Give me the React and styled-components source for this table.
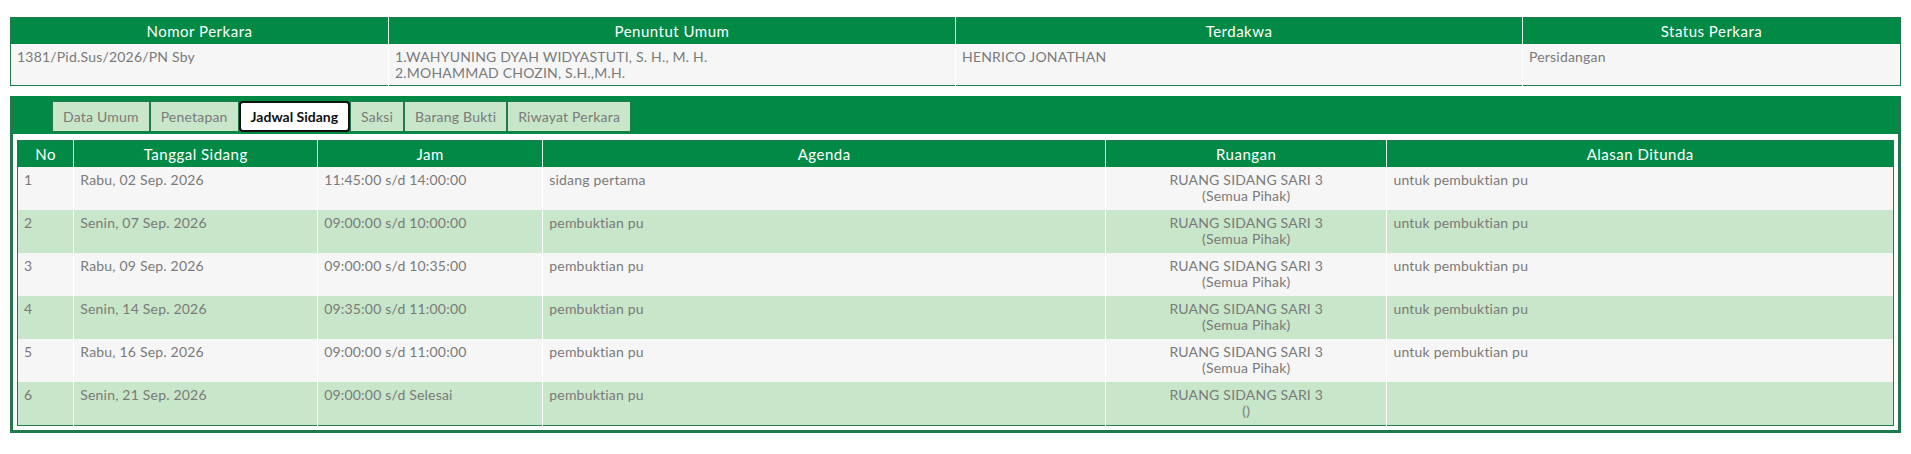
import React from 'react';
import styled, { createGlobalStyle } from 'styled-components';

const GREEN = '#008a45';
const DARK = '#1f7a4c';
const ROW_ALT = '#c8e6c9';
const ROW = '#f6f6f6';
const TEXT = '#7a7a7a';

const GlobalStyle = createGlobalStyle`
  html, body {
    margin: 0;
    background: #fff;
  }
  body {
    font-family: Lato, "Open Sans", sans-serif;
    font-size: 14px;
    letter-spacing: 0.2px;
    color: ${TEXT};
  }
`;

const Page = styled.div`
  padding: 17px 10px 0;
`;

const Table = styled.table`
  width: 100%;
  border-collapse: collapse;
  table-layout: fixed;
  border: 1px solid ${DARK};
`;

const Th = styled.th`
  background: ${GREEN};
  color: #fff;
  font-weight: normal;
  font-size: 15px;
  line-height: 18px;
  letter-spacing: 0.5px;
  height: ${p => p.$h || 26}px;
  padding: 0 5px;
  border-left: 1px solid #e8f3ec;
  &:first-child {
    border-left: none;
  }
`;

const Td = styled.td`
  vertical-align: top;
  padding: 5px 6px ${p => p.$pb ?? 6}px;
  line-height: 16px;
  text-align: ${p => (p.$center ? 'center' : 'left')};
  border-left: 1px solid #fff;
  &:first-child {
    border-left: none;
  }
`;

const Row = styled.tr`
  background: ${p => (p.$alt ? ROW_ALT : ROW)};
`;

const Panel = styled.div`
  margin-top: 10px;
  border: 3px solid ${DARK};
  border-top-color: ${GREEN};
`;

const TabStrip = styled.div`
  display: flex;
  background: ${GREEN};
  padding: 2px 0 2px 39px;
`;

const Tab = styled.div`
  height: 31px;
  box-sizing: border-box;
  display: flex;
  align-items: center;
  padding: 0 10px;
  font-size: 14px;
  background: ${p => (p.$active ? '#fff' : ROW_ALT)};
  color: ${p => (p.$active ? '#111' : TEXT)};
  font-weight: ${p => (p.$active ? 700 : 400)};
  letter-spacing: ${p => (p.$active ? '0' : '0.2px')};
  border: ${p => (p.$active ? '2px solid #111' : `1px solid ${DARK}`)};
  border-radius: ${p => (p.$active ? '4px' : '0')};
  & + & {
    margin-left: ${p => (p.$active ? '0' : '-1px')};
  }
`;

const Content = styled.div`
  padding: 6px 4px 4px;
`;

const cases = {
  nomor: '1381/Pid.Sus/2026/PN Sby',
  penuntut: ['1.WAHYUNING DYAH WIDYASTUTI, S. H., M. H.', '2.MOHAMMAD CHOZIN, S.H.,M.H.'],
  terdakwa: 'HENRICO JONATHAN',
  status: 'Persidangan',
};

const tabs = ['Data Umum', 'Penetapan', 'Jadwal Sidang', 'Saksi', 'Barang Bukti', 'Riwayat Perkara'];

const schedule = [
  ['Rabu, 02 Sep. 2026', '11:45:00 s/d 14:00:00', 'sidang pertama', '(Semua Pihak)', 'untuk pembuktian pu'],
  ['Senin, 07 Sep. 2026', '09:00:00 s/d 10:00:00', 'pembuktian pu', '(Semua Pihak)', 'untuk pembuktian pu'],
  ['Rabu, 09 Sep. 2026', '09:00:00 s/d 10:35:00', 'pembuktian pu', '(Semua Pihak)', 'untuk pembuktian pu'],
  ['Senin, 14 Sep. 2026', '09:35:00 s/d 11:00:00', 'pembuktian pu', '(Semua Pihak)', 'untuk pembuktian pu'],
  ['Rabu, 16 Sep. 2026', '09:00:00 s/d 11:00:00', 'pembuktian pu', '(Semua Pihak)', 'untuk pembuktian pu'],
  ['Senin, 21 Sep. 2026', '09:00:00 s/d Selesai', 'pembuktian pu', '()', ''],
];

export default function App() {
  return (
    <Page>
      <GlobalStyle />
      <Table>
        <colgroup>
          <col style={{ width: '20%' }} />
          <col style={{ width: '30%' }} />
          <col style={{ width: '30%' }} />
          <col style={{ width: '20%' }} />
        </colgroup>
        <thead>
          <tr>
            <Th>Nomor Perkara</Th>
            <Th>Penuntut Umum</Th>
            <Th>Terdakwa</Th>
            <Th>Status Perkara</Th>
          </tr>
        </thead>
        <tbody>
          <Row>
            <Td $pb={4}>{cases.nomor}</Td>
            <Td $pb={4}>
              {cases.penuntut[0]}
              <br />
              {cases.penuntut[1]}
            </Td>
            <Td $pb={4}>{cases.terdakwa}</Td>
            <Td $pb={4}>{cases.status}</Td>
          </Row>
        </tbody>
      </Table>

      <Panel>
        <TabStrip>
          {tabs.map(t => (
            <Tab key={t} $active={t === 'Jadwal Sidang'}>
              {t}
            </Tab>
          ))}
        </TabStrip>
        <Content>
          <Table>
            <colgroup>
              <col style={{ width: '3%' }} />
              <col style={{ width: '13%' }} />
              <col style={{ width: '12%' }} />
              <col style={{ width: '30%' }} />
              <col style={{ width: '15%' }} />
              <col style={{ width: '27%' }} />
            </colgroup>
            <thead>
              <tr>
                <Th>No</Th>
                <Th>Tanggal Sidang</Th>
                <Th>Jam</Th>
                <Th>Agenda</Th>
                <Th>Ruangan</Th>
                <Th>Alasan Ditunda</Th>
              </tr>
            </thead>
            <tbody>
              {schedule.map((r, i) => (
                <Row key={i} $alt={i % 2 === 1}>
                  <Td>{i + 1}</Td>
                  <Td>{r[0]}</Td>
                  <Td>{r[1]}</Td>
                  <Td>{r[2]}</Td>
                  <Td $center>
                    RUANG SIDANG SARI 3
                    <br />
                    {r[3]}
                  </Td>
                  <Td>{r[4]}</Td>
                </Row>
              ))}
            </tbody>
          </Table>
        </Content>
      </Panel>
    </Page>
  );
}
